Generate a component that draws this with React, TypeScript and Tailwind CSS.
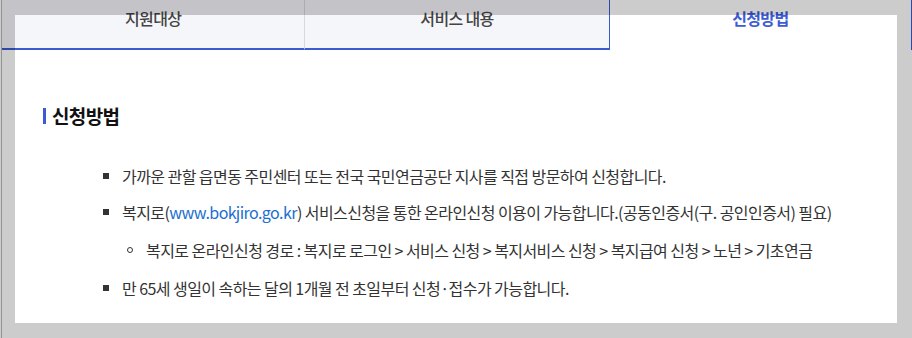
const tabs = ['지원대상', '서비스 내용', '신청방법'];

const Square = () => <span className="w-[6px] h-[6px] bg-[#333] mr-[13px] shrink-0" />;

export default function App() {
  return (
    <div
      className="relative w-[912px] h-[338px] bg-white overflow-hidden"
      style={{ fontFamily: '"Noto Sans CJK KR", "Noto Sans", sans-serif' }}>
      <div className="h-full ml-px border-l border-[#b8b8b8] flex flex-col">
        <div className="grid grid-cols-3 h-[50px] w-[910px]">
          {tabs.map((t, i) =>
            i === 2 ? (
              <div
                key={t}
                className="bg-white border-x border-[#3a5bd4] flex justify-center pt-[6px] text-[16px] font-bold tracking-[-0.04em] text-[#3d5cd6]">
                {t}
              </div>
            ) : (
              <div
                key={t}
                className={`bg-[#f5f6fa] border-b-2 border-b-[#3a5bd4] flex justify-center pt-[6px] text-[16px] font-medium tracking-[-0.04em] text-[#444] ${
                  i === 0 ? 'border-r border-r-[#d6d8de]' : ''
                }`}>
                {t}
              </div>
            ),
          )}
        </div>

        <div className="pl-[41px] pt-[54px] tracking-[-0.04em]">
          <h3 className="flex items-center gap-[6px] text-[19px] font-bold text-[#111] leading-[24px]">
            <span className="w-[3px] h-[16px] bg-[#3a5bd4]" />
            신청방법
          </h3>
          <ul className="mt-[37px] pl-[60px] text-[16px] tracking-[-0.035em] text-[#333] leading-[22px] flex flex-col">
            <li className="flex items-center">
              <Square />
              <span>가까운 관할 읍면동 주민센터 또는 전국 국민연금공단 지사를 직접 방문하여 신청합니다.</span>
            </li>
            <li className="mt-[14px]">
              <div className="flex items-center">
                <Square />
                <span>
                  복지로(<span className="text-[#1b6fd1]">www.bokjiro.go.kr</span>) 서비스신청을 통한 온라인신청 이용이 가능합니다.(공동인증서(구. 공인인증서) 필요)
                </span>
              </div>
              <div className="flex items-center mt-[16px] pl-[24px]">
                <span className="w-[6px] h-[6px] rounded-full border border-[#333] mr-[13px] shrink-0" />
                <span>
                  복지로 온라인신청 경로 : 복지로 로그인 &gt; 서비스 신청 &gt; 복지서비스 신청 &gt; 복지급여 신청 &gt; 노년 &gt; 기초연금
                </span>
              </div>
            </li>
            <li className="mt-[16px] flex items-center">
              <Square />
              <span>만 65세 생일이 속하는 달의 1개월 전 초일부터 신청·접수가 가능합니다.</span>
            </li>
          </ul>
        </div>
      </div>

      <div className="absolute top-0 left-0 right-0 h-[15px] bg-black/20" />
      <div className="absolute top-[15px] bottom-0 left-0 w-[15px] bg-black/20" />
      <div className="absolute top-[15px] bottom-0 right-0 w-[15px] bg-black/20" />
      <div className="absolute bottom-0 left-[15px] right-[15px] h-[15px] bg-black/20" />
    </div>
  );
}
